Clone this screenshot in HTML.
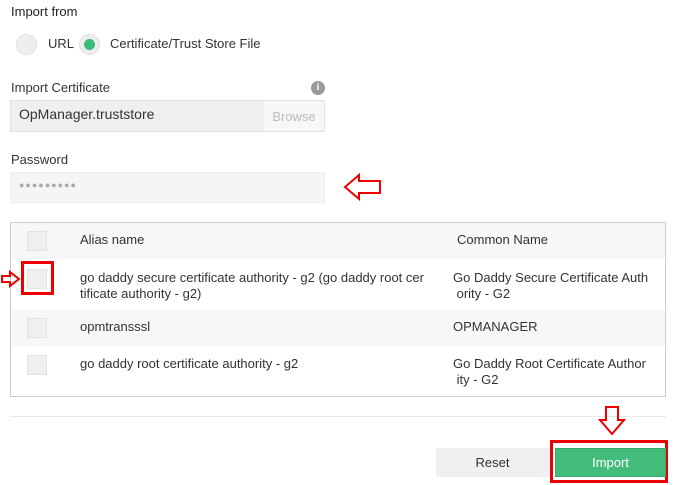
<!DOCTYPE html><html><head><style>
body{margin:0;width:675px;height:485px;background:#fff;font-family:"Liberation Sans",sans-serif;color:#333;font-size:13px;position:relative;overflow:hidden}
.a{position:absolute;white-space:nowrap}
.cb{position:absolute;width:20px;height:20px;background:#efefef;border:1px solid #e2e2e2;box-sizing:border-box}
</style></head><body>
<div class="a" style="left:11px;top:4px;font-size:13px;color:#222">Import from</div>
<div class="a" style="left:16px;top:34px;width:21px;height:21px;border-radius:50%;background:#eee;border:1px solid #e0e0e0;box-sizing:border-box"></div>
<div class="a" style="left:48px;top:36px">URL</div>
<div class="a" style="left:79px;top:34px;width:21px;height:21px;border-radius:50%;background:#eee;border:1px solid #e0e0e0;box-sizing:border-box"></div>
<div class="a" style="left:84px;top:39px;width:11px;height:11px;border-radius:50%;background:#3dbb77"></div>
<div class="a" style="left:110px;top:36px">Certificate/Trust Store File</div>
<div class="a" style="left:11px;top:80px">Import Certificate</div>
<div class="a" style="left:311px;top:81px;width:14px;height:14px;border-radius:50%;background:#999;color:#fff;font-size:10px;font-weight:bold;text-align:center;line-height:14px">i</div>
<div class="a" style="left:10px;top:100px;width:315px;height:32px;background:#efefef;border:1px solid #e2e2e2;box-sizing:border-box"></div>
<div class="a" style="left:264px;top:101px;width:60px;height:30px;background:#f7f7f7;color:#bbb;text-align:center;line-height:32px">Browse</div>
<div class="a" style="left:19px;top:106px;font-size:14px">OpManager.truststore</div>
<div class="a" style="left:11px;top:152px">Password</div>
<div class="a" style="left:10px;top:172px;width:315px;height:31px;background:#f5f5f5;border:1px solid #efefef;box-sizing:border-box"></div>
<div class="a" style="left:19px;top:180px;color:#aaa;font-size:9px;letter-spacing:1px">●●●●●●●●●</div>
<svg class="a" style="left:342px;top:172px" width="42" height="30"><path d="M3 15 L17 3 L17 9 L38 9 L38 21 L17 21 L17 27 Z" fill="none" stroke="#e00" stroke-width="2"/></svg>
<div class="a" style="left:10px;top:222px;width:656px;height:175px;border:1px solid #ccc;box-sizing:border-box"></div>
<div class="a" style="left:11px;top:223px;width:654px;height:36px;background:#f7f7f7"></div>
<div class="a" style="left:11px;top:310px;width:654px;height:36px;background:#f7f7f7"></div>
<div class="cb" style="left:27px;top:231px"></div>
<div class="cb" style="left:27px;top:269px"></div>
<div class="cb" style="left:27px;top:318px"></div>
<div class="cb" style="left:27px;top:355px"></div>
<div class="a" style="left:21px;top:261px;width:33px;height:34px;border:3px solid #e00;box-sizing:border-box"></div>
<svg class="a" style="left:0;top:270px" width="22" height="18"><path d="M2 6 L10 6 L10 2 L19 9 L10 16 L10 12 L2 12 Z" fill="none" stroke="#e00" stroke-width="2"/></svg>
<div class="a" style="left:80px;top:232px">Alias name</div>
<div class="a" style="left:457px;top:232px">Common Name</div>
<div class="a" style="left:80px;top:270px;line-height:16px">go daddy secure certificate authority - g2 (go daddy root cer<br>tificate authority - g2)</div>
<div class="a" style="left:453px;top:270px;line-height:16px">Go Daddy Secure Certificate Auth<br>&nbsp;ority - G2</div>
<div class="a" style="left:80px;top:319px">opmtransssl</div>
<div class="a" style="left:453px;top:319px">OPMANAGER</div>
<div class="a" style="left:80px;top:356px">go daddy root certificate authority - g2</div>
<div class="a" style="left:453px;top:356px;line-height:16px">Go Daddy Root Certificate Author<br>&nbsp;ity - G2</div>
<div class="a" style="left:10px;top:416px;width:656px;height:1px;background:#e8e8e8"></div>
<svg class="a" style="left:597px;top:405px" width="30" height="32"><path d="M9 2 L21 2 L21 15 L27 15 L15 29 L3 15 L9 15 Z" fill="none" stroke="#e00" stroke-width="2"/></svg>
<div class="a" style="left:436px;top:448px;width:113px;height:29px;background:#f0f0f0;text-align:center;line-height:29px">Reset</div>
<div class="a" style="left:550px;top:440px;width:118px;height:43px;border:3px solid #e00;box-sizing:border-box"></div>
<div class="a" style="left:555px;top:448px;width:111px;height:29px;background:#42bd7b;border:1px solid #3aa86c;box-sizing:border-box;color:#fff;text-align:center;line-height:27px">Import</div>
</body></html>
